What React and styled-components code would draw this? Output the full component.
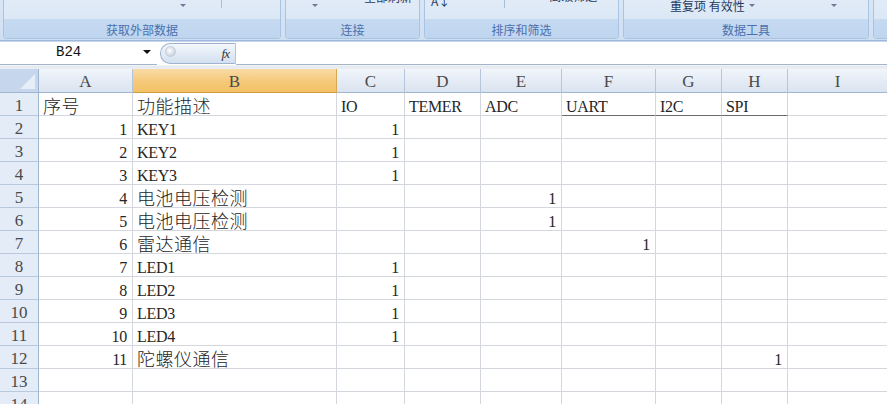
import React from "react";
import styled, { createGlobalStyle } from "styled-components";

const GlobalStyle = createGlobalStyle`
  html, body {
    margin: 0;
    padding: 0;
    background: #ffffff;
    overflow: hidden;
  }
`;

const Page = styled.div`
  width: 887px;
  height: 404px;
  overflow: hidden;
  display: flex;
  flex-direction: column;
  background: #ffffff;
`;

/* ---------- ribbon ---------- */

const Ribbon = styled.div`
  flex: none;
  height: 41px;
  display: flex;
  gap: 4px;
  padding: 0 0 0 3px;
  box-sizing: border-box;
  background: linear-gradient(#d9e6f5, #cfdff2);
  border-bottom: 1px solid #9cb8dc;
  overflow: hidden;
`;

const Group = styled.div`
  width: ${(p) => p.$width}px;
  flex: none;
  height: 39px;
  display: flex;
  flex-direction: column;
  border: 1px solid #a9c3e2;
  border-top: none;
  border-radius: 0 0 4px 4px;
  box-shadow: inset 1px 0 0 #f4f8fd, inset -1px 0 0 #f4f8fd;
  box-sizing: border-box;
  overflow: hidden;
`;

const GroupBody = styled.div`
  flex: none;
  height: 19px;
  display: flex;
  align-items: flex-start;
  background: linear-gradient(#e1ebf7, #dce8f6);
  overflow: hidden;
`;

const GroupLabel = styled.div`
  flex: 1;
  display: flex;
  align-items: center;
  justify-content: center;
  background: linear-gradient(#c6daf1, #bfd5ef);
  color: #4a70ad;
  font-family: "Noto Sans CJK SC", sans-serif;
  font-size: 12px;
  line-height: 14px;
  padding-top: 3px;
`;

const Caret = styled.span`
  margin-left: ${(p) => p.$at}px;
  margin-top: 4px;
  width: 0;
  height: 0;
  border-left: 3px solid transparent;
  border-right: 3px solid transparent;
  border-top: 3px solid #6a7c95;
  flex: none;
`;

const Divider = styled.span`
  margin-left: ${(p) => p.$at}px;
  width: 1px;
  height: 8px;
  background: #a9bcd6;
  flex: none;
`;

const CutText = styled.span`
  margin-left: ${(p) => p.$at}px;
  margin-top: ${(p) => p.$top}px;
  font-family: "Noto Sans CJK SC", sans-serif;
  font-size: 12px;
  line-height: 14px;
  color: #1e3a62;
  white-space: nowrap;
  flex: none;
`;

/* ---------- formula bar ---------- */

const FormulaBar = styled.div`
  flex: none;
  height: 28px;
  display: flex;
  align-items: flex-start;
  padding-top: 1px;
  box-sizing: border-box;
  background: linear-gradient(#ffffff 0, #ffffff 23px, #e4e9f0 24px, #eef1f5 28px);
  border-top: 1px solid #c7d6ea;
`;

const NameBox = styled.div`
  width: 157px;
  height: 22px;
  flex: none;
  display: flex;
  align-items: center;
  box-sizing: border-box;
  border-bottom: 1px solid #a5b5c9;
  font-family: "Liberation Mono", monospace;
  font-size: 14px;
  color: #111;
`;

const NameText = styled.span`
  margin-left: 56px;
  margin-top: -3px;
  flex: 1;
`;

const DropArrow = styled.span`
  width: 0;
  height: 0;
  margin-right: 6px;
  margin-top: -3px;
  border-left: 4px solid transparent;
  border-right: 4px solid transparent;
  border-top: 4px solid #111;
`;

const FxPill = styled.div`
  width: 76px;
  height: 21px;
  flex: none;
  margin-left: 3px;
  display: flex;
  align-items: center;
  justify-content: space-between;
  box-sizing: border-box;
  padding: 0 6px 0 4px;
  border: 1px solid #9fb4cf;
  border-right: 1px solid #b6c4d6;
  border-radius: 10px 0 0 10px;
  background: linear-gradient(#f3f7fc, #d3e0f0);
`;

const Knob = styled.span`
  width: 9px;
  height: 9px;
  border-radius: 50%;
  background: radial-gradient(circle at 40% 40%, #ffffff, #b5c3d3);
  border: 1px solid #c3cdd9;
  margin-top: -4px;
`;

const Fx = styled.span`
  font-family: "Liberation Serif", serif;
  font-style: italic;
  font-size: 13px;
  color: #333;
  letter-spacing: -1px;
`;

const FormulaInput = styled.div`
  flex: 1;
  height: 22px;
  box-sizing: border-box;
  border-bottom: 1px solid #a5b5c9;
`;

/* ---------- sheet ---------- */

const Sheet = styled.div`
  flex: none;
  display: grid;
  grid-template-columns: ${(p) => p.$cols.map((c) => `${c}px`).join(" ")};
  grid-template-rows: 24px;
  grid-auto-rows: 23px;
`;

const Corner = styled.div`
  position: relative;
  box-sizing: border-box;
  background: #c6d6ec;
  border-right: 1px solid #9eb6ce;
  border-bottom: 1px solid #9eb6ce;
  overflow: hidden;
  &::after {
    content: "";
    position: absolute;
    right: 3px;
    bottom: 3px;
    border-left: 15px solid transparent;
    border-bottom: 15px solid #e6eef8;
  }
`;

const ColHead = styled.div`
  box-sizing: border-box;
  display: flex;
  align-items: flex-end;
  justify-content: center;
  padding-bottom: 2px;
  border-right: 1px solid ${(p) => (p.$active ? "#d8a74f" : "#b5c6dc")};
  border-bottom: 1px solid ${(p) => (p.$active ? "#d29c3b" : "#9eb6ce")};
  background: ${(p) =>
    p.$active
      ? "linear-gradient(#f9dba6, #f5c979 55%, #f2c267)"
      : "linear-gradient(#f1f5fb, #e4ebf5 55%, #dae3f0)"};
  font-family: "Liberation Serif", serif;
  font-size: 17px;
  line-height: 17px;
  color: #4a4a4a;
`;

const RowHead = styled.div`
  box-sizing: border-box;
  display: flex;
  align-items: flex-end;
  justify-content: center;
  padding-bottom: 1px;
  background: #e4ecf7;
  border-right: 1px solid #9eb6ce;
  border-bottom: 1px solid #b9c9dd;
  font-family: "Liberation Serif", serif;
  font-size: 17px;
  line-height: 17px;
  color: #4a4a4a;
`;

const Cell = styled.div`
  box-sizing: border-box;
  display: flex;
  align-items: flex-end;
  justify-content: ${(p) => (p.$num ? "flex-end" : "flex-start")};
  padding: 0 ${(p) => (p.$num ? 5 : 3)}px 0 4px;
  border-right: 1px solid #d4d8de;
  border-bottom: 1px solid ${(p) => (p.$under ? "#6b6b6b" : "#d4d8de")};
  white-space: nowrap;
  overflow: visible;
  color: #262626;
  font-family: ${(p) =>
    p.$cjk ? '"Noto Sans CJK SC", sans-serif' : '"Liberation Serif", "Noto Sans CJK SC", serif'};
  font-size: ${(p) => (p.$cjk ? 18 : 16)}px;
  line-height: ${(p) => (p.$cjk ? 20 : 17)}px;
  letter-spacing: ${(p) => (p.$cjk ? "0.5px" : "-0.3px")};
  font-weight: ${(p) => (p.$cjk ? 300 : 400)};
`;

const COLS = [39, 94, 204, 68, 76, 81, 94, 66, 66, 100];
const LETTERS = ["A", "B", "C", "D", "E", "F", "G", "H", "I"];

const ROWS = [
  ["序号", "功能描述", "IO", "TEMER", "ADC", "UART", "I2C", "SPI", ""],
  [1, "KEY1", 1, "", "", "", "", "", ""],
  [2, "KEY2", 1, "", "", "", "", "", ""],
  [3, "KEY3", 1, "", "", "", "", "", ""],
  [4, "电池电压检测", "", "", 1, "", "", "", ""],
  [5, "电池电压检测", "", "", 1, "", "", "", ""],
  [6, "雷达通信", "", "", "", 1, "", "", ""],
  [7, "LED1", 1, "", "", "", "", "", ""],
  [8, "LED2", 1, "", "", "", "", "", ""],
  [9, "LED3", 1, "", "", "", "", "", ""],
  [10, "LED4", 1, "", "", "", "", "", ""],
  [11, "陀螺仪通信", "", "", "", "", "", 1, ""],
  ["", "", "", "", "", "", "", "", ""],
  ["", "", "", "", "", "", "", "", ""],
];

const hasCjk = (v) => typeof v === "string" && /[\u4e00-\u9fff]/.test(v);

export default function App() {
  return (
    <Page>
      <GlobalStyle />
      <Ribbon>
        <Group $width={278}>
          <GroupBody>
            <Caret $at={176} />
            <Divider $at={35} />
          </GroupBody>
          <GroupLabel>获取外部数据</GroupLabel>
        </Group>
        <Group $width={135}>
          <GroupBody>
            <Caret $at={26} />
            <CutText $at={46} $top={-10}>全部刷新</CutText>
          </GroupBody>
          <GroupLabel>连接</GroupLabel>
        </Group>
        <Group $width={195}>
          <GroupBody>
            <CutText $at={6} $top={-6}>A↓</CutText>
            <Divider $at={54} />
            <CutText $at={44} $top={-11}>高级筛选</CutText>
          </GroupBody>
          <GroupLabel>排序和筛选</GroupLabel>
        </Group>
        <Group $width={246}>
          <GroupBody>
            <CutText $at={46} $top={-1}>重复项 有效性</CutText>
            <Caret $at={4} />
            <Caret $at={76} />
          </GroupBody>
          <GroupLabel>数据工具</GroupLabel>
        </Group>
        <Group $width={40}>
          <GroupBody />
          <GroupLabel />
        </Group>
      </Ribbon>

      <FormulaBar>
        <NameBox>
          <NameText>B24</NameText>
          <DropArrow />
        </NameBox>
        <FxPill>
          <Knob />
          <Fx>fx</Fx>
        </FxPill>
        <FormulaInput />
      </FormulaBar>

      <Sheet $cols={COLS}>
        <Corner />
        {LETTERS.map((l) => (
          <ColHead key={l} $active={l === "B"}>
            {l}
          </ColHead>
        ))}
        {ROWS.map((row, r) => (
          <React.Fragment key={r}>
            <RowHead>{r + 1}</RowHead>
            {row.map((v, c) => (
              <Cell
                key={c}
                $num={typeof v === "number"}
                $cjk={hasCjk(v)}
                $under={r === 0 && c >= 5 && c <= 7}
              >
                {v}
              </Cell>
            ))}
          </React.Fragment>
        ))}
      </Sheet>
    </Page>
  );
}
